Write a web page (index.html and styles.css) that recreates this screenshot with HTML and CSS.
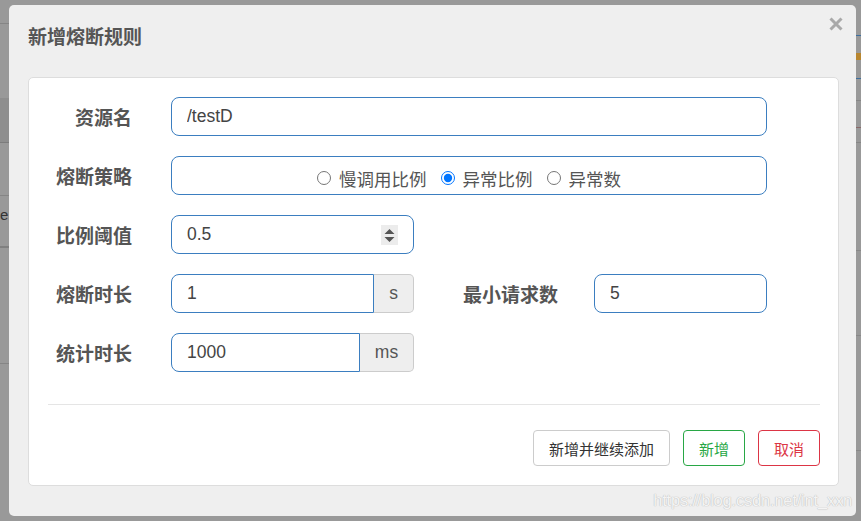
FILE: index.html
```html
<!DOCTYPE html>
<html lang="zh-CN">
<head>
<meta charset="utf-8">
<title>新增熔断规则</title>
<link rel="stylesheet" href="styles.css">
</head>
<body>
<div class="backdrop-text">e:</div>
<div class="modal">
  <div class="modal-header">
    <h4 class="modal-title">新增熔断规则</h4>
    <span class="close"><svg width="14" height="14" viewBox="0 0 14 14"><path d="M1.5 1.5 L12.5 12.5 M12.5 1.5 L1.5 12.5" stroke="#a9a9a9" stroke-width="3" stroke-linecap="butt"/></svg></span>
  </div>
  <div class="modal-body">
    <div class="card">
      <form class="form">
        <div class="row">
          <label class="label">资源名</label>
          <div class="control"><input class="input" type="text" value="/testD"></div>
        </div>
        <div class="row">
          <label class="label">熔断策略</label>
          <div class="control radio-box">
            <label class="radio"><input type="radio" name="grade"><span>慢调用比例</span></label>
            <label class="radio"><input type="radio" name="grade" checked><span>异常比例</span></label>
            <label class="radio"><input type="radio" name="grade"><span>异常数</span></label>
          </div>
        </div>
        <div class="row">
          <label class="label">比例阈值</label>
          <div class="group number">
            <input class="bare" type="text" value="0.5">
            <svg class="spinner" width="17" height="20" viewBox="0 0 17 20"><rect width="17" height="20" fill="#ececec"/><path d="M3.5 9 L13.5 9 L8.5 4 Z M3.5 12 L13.5 12 L8.5 17 Z" fill="#555"/></svg>
          </div>
        </div>
        <div class="row">
          <label class="label">熔断时长</label>
          <div class="group">
            <input class="input input-left" type="text" value="1">
            <span class="addon addon-s">s</span>
          </div>
          <label class="label label-wide">最小请求数</label>
          <div class="control-sm"><input class="input" type="text" value="5"></div>
        </div>
        <div class="row">
          <label class="label">统计时长</label>
          <div class="group">
            <input class="input input-left" type="text" value="1000">
            <span class="addon addon-ms">ms</span>
          </div>
        </div>
      </form>
      <hr class="divider">
      <div class="actions">
        <button class="btn" type="button">新增并继续添加</button>
        <button class="btn btn-green" type="button">新增</button>
        <button class="btn btn-red" type="button">取消</button>
      </div>
    </div>
  </div>
  <div class="watermark">https://blog.csdn.net/int_xxn</div>
</div>
</body>
</html>
```
FILE: styles.css
```css
html, body {
  margin: 0;
  padding: 0;
}
body {
  width: 861px;
  height: 521px;
  overflow: hidden;
  position: relative;
  font-family: "Liberation Sans", "Noto Sans CJK SC", sans-serif;
  background-color: #999;
  background-image:
    linear-gradient(#999 0 23px, #858585 23px 24px, #999 24px 98px, #8e8e8e 98px 142px, #7c7c7c 142px 143px, #999 143px 195px, #858585 195px 196px, #999 196px 246px, #808080 246px 248px, #999 248px 363px, #858585 363px 364px, #999 364px),
    linear-gradient(#999 0 35px, #3d6f9e 35px 36px, #999 36px 53px, #b8862f 53px 60px, #999 60px 78px, #3d6f9e 78px 79px, #999 79px 100px, #868686 100px 101px, #999 101px 127px, #8a6a6a 127px 128px, #999 128px 142px, #868686 142px 143px, #999 143px 250px, #888 250px 251px, #999 251px 335px, #888 335px 336px, #999 336px 450px, #888 450px 451px, #999 451px);
  background-size: 9px 100%, 6px 100%;
  background-position: left top, right top;
  background-repeat: no-repeat;
}
.backdrop-text {
  position: absolute;
  left: 0;
  top: 206px;
  width: 9px;
  overflow: hidden;
  font-size: 15px;
  color: #333;
  white-space: nowrap;
}
.modal {
  position: absolute;
  left: 9px;
  top: 5px;
  width: 847px;
  height: 511px;
  background: #efefef;
  border-radius: 5px;
  box-sizing: border-box;
  display: flex;
  flex-direction: column;
}
.modal-header {
  height: 72px;
  box-sizing: border-box;
  padding: 20px 13px 0 19px;
  display: flex;
  justify-content: space-between;
  align-items: flex-start;
}
.modal-title {
  margin: 0;
  font-size: 19px;
  line-height: 26px;
  font-weight: bold;
  color: #555;
}
.close {
  display: block;
  width: 14px;
  height: 14px;
  margin-top: -8px;
}
.close svg {
  display: block;
}
.modal-body {
  padding: 0 17px 0 19px;
}
.card {
  background: #fff;
  border: 1px solid #ddd;
  border-radius: 5px;
  height: 409px;
  box-sizing: border-box;
  padding: 19px 18px 0 19px;
}
.form {
  display: flex;
  flex-direction: column;
  gap: 20px;
  padding-right: 53px;
  margin: 0;
}
.row {
  display: flex;
  align-items: center;
  height: 39px;
}
.label {
  width: 84px;
  flex: none;
  margin-right: 39px;
  text-align: right;
  font-size: 19px;
  font-weight: bold;
  color: #555;
  white-space: nowrap;
}
.label-wide {
  width: 144px;
  margin-right: 36px;
}
.control {
  flex: 1;
  height: 39px;
}
.control-sm {
  width: 173px;
  height: 39px;
}
.input {
  display: block;
  width: 100%;
  height: 39px;
  box-sizing: border-box;
  border: 1px solid #3b7ec0;
  border-radius: 8px;
  padding: 0 15px;
  font-family: "Liberation Sans", "Noto Sans CJK SC", sans-serif;
  font-size: 17.5px;
  color: #444;
  background: #fff;
  outline: none;
  margin: 0;
}
.radio-box {
  box-sizing: border-box;
  border: 1px solid #3b7ec0;
  border-radius: 8px;
  display: flex;
  justify-content: center;
  align-items: center;
  gap: 14px;
  padding-top: 5px;
}
.radio {
  display: flex;
  align-items: center;
  font-size: 17.5px;
  color: #555;
}
.radio input {
  width: 14px;
  height: 14px;
  margin: 0 8px 0 0;
}
.group {
  width: 243px;
  flex: none;
  height: 39px;
  display: flex;
}
.number {
  box-sizing: border-box;
  border: 1px solid #3b7ec0;
  border-radius: 8px;
  padding: 0 15px;
  align-items: center;
}
.bare {
  flex: 1;
  min-width: 0;
  border: none;
  outline: none;
  padding: 0;
  margin: 0;
  font-family: "Liberation Sans", "Noto Sans CJK SC", sans-serif;
  font-size: 17.5px;
  color: #444;
  background: transparent;
}
.spinner {
  display: block;
  flex: none;
}
.input-left {
  flex: 1;
  min-width: 0;
  border-radius: 8px 0 0 8px;
}
.addon {
  flex: none;
  box-sizing: border-box;
  height: 39px;
  display: flex;
  align-items: center;
  justify-content: center;
  background: #eee;
  border: 1px solid #ccc;
  border-left: none;
  border-radius: 0 5px 5px 0;
  font-size: 17.5px;
  color: #555;
}
.addon-s {
  width: 40px;
}
.addon-ms {
  width: 54px;
}
.divider {
  margin: 32px 0 0;
  border: none;
  border-top: 1px solid #e5e5e5;
  height: 0;
}
.actions {
  margin-top: 25px;
  display: flex;
  justify-content: flex-end;
  gap: 13px;
}
.btn {
  height: 36px;
  padding: 0 15px;
  box-sizing: border-box;
  background: #fff;
  border: 1px solid #ccc;
  border-radius: 4px;
  font-family: "Liberation Sans", "Noto Sans CJK SC", sans-serif;
  font-size: 15px;
  color: #333;
  cursor: pointer;
}
.btn-green {
  border-color: #28a745;
  color: #28a745;
}
.btn-red {
  border-color: #dc3545;
  color: #dc3545;
}
.watermark {
  position: absolute;
  right: 4px;
  bottom: 6px;
  font-size: 16.5px;
  color: #f4f4f4;
  text-shadow: 0 0 1px #b8b8b8, 0 0 1px #c8c8c8;
  letter-spacing: -0.2px;
}
```
